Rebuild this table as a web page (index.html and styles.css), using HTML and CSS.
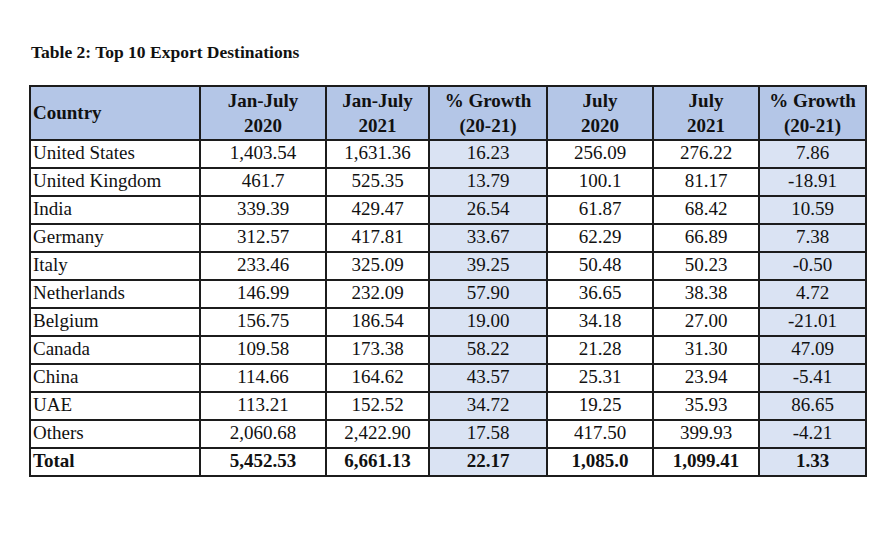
FILE: index.html
```html
<!DOCTYPE html>
<html>
<head>
<meta charset="utf-8">
<link rel="stylesheet" href="styles.css">
</head>
<body>
<div class="page">
  <h1 class="title">Table 2: Top 10 Export Destinations</h1>
  <table class="exports">
    <colgroup>
      <col class="c-country"><col class="c-jan20"><col class="c-jan21"><col class="c-g1"><col class="c-jul20"><col class="c-jul21"><col class="c-g2">
    </colgroup>
    <thead>
      <tr>
        <th class="country">Country</th>
        <th>Jan-July<br>2020</th>
        <th>Jan-July<br>2021</th>
        <th>% Growth<br>(20-21)</th>
        <th>July<br>2020</th>
        <th>July<br>2021</th>
        <th>% Growth<br>(20-21)</th>
      </tr>
    </thead>
    <tbody>
      <tr><td class="country">United States</td><td>1,403.54</td><td>1,631.36</td><td class="shade">16.23</td><td>256.09</td><td>276.22</td><td class="shade">7.86</td></tr>
      <tr><td class="country">United Kingdom</td><td>461.7</td><td>525.35</td><td class="shade">13.79</td><td>100.1</td><td>81.17</td><td class="shade">-18.91</td></tr>
      <tr><td class="country">India</td><td>339.39</td><td>429.47</td><td class="shade">26.54</td><td>61.87</td><td>68.42</td><td class="shade">10.59</td></tr>
      <tr><td class="country">Germany</td><td>312.57</td><td>417.81</td><td class="shade">33.67</td><td>62.29</td><td>66.89</td><td class="shade">7.38</td></tr>
      <tr><td class="country">Italy</td><td>233.46</td><td>325.09</td><td class="shade">39.25</td><td>50.48</td><td>50.23</td><td class="shade">-0.50</td></tr>
      <tr><td class="country">Netherlands</td><td>146.99</td><td>232.09</td><td class="shade">57.90</td><td>36.65</td><td>38.38</td><td class="shade">4.72</td></tr>
      <tr><td class="country">Belgium</td><td>156.75</td><td>186.54</td><td class="shade">19.00</td><td>34.18</td><td>27.00</td><td class="shade">-21.01</td></tr>
      <tr><td class="country">Canada</td><td>109.58</td><td>173.38</td><td class="shade">58.22</td><td>21.28</td><td>31.30</td><td class="shade">47.09</td></tr>
      <tr><td class="country">China</td><td>114.66</td><td>164.62</td><td class="shade">43.57</td><td>25.31</td><td>23.94</td><td class="shade">-5.41</td></tr>
      <tr><td class="country">UAE</td><td>113.21</td><td>152.52</td><td class="shade">34.72</td><td>19.25</td><td>35.93</td><td class="shade">86.65</td></tr>
      <tr><td class="country">Others</td><td>2,060.68</td><td>2,422.90</td><td class="shade">17.58</td><td>417.50</td><td>399.93</td><td class="shade">-4.21</td></tr>
      <tr class="total"><td class="country">Total</td><td>5,452.53</td><td>6,661.13</td><td class="shade">22.17</td><td>1,085.0</td><td>1,099.41</td><td class="shade">1.33</td></tr>
    </tbody>
  </table>
</div>
</body>
</html>
```
FILE: styles.css
```css
html, body {
  margin: 0;
  padding: 0;
  background: #ffffff;
}

.page {
  padding: 42px 0 0 29px;
  font-family: "Liberation Serif", "Times New Roman", serif;
  color: #111;
}

.title {
  margin: 0 0 23px 2px;
  font-family: "Liberation Serif", "Times New Roman", serif;
  font-size: 17.5px;
  line-height: 20px;
  font-weight: bold;
}

.exports {
  width: 836px;
  table-layout: fixed;
  border-collapse: collapse;
  border: 2px solid #1c1c1c;
  font-family: "Liberation Serif", "Times New Roman", serif;
  font-size: 19px;
}

.c-country { width: 170px; }
.c-jan20 { width: 126px; }
.c-jan21 { width: 103px; }
.c-g1 { width: 118px; }
.c-jul20 { width: 106px; }
.c-jul21 { width: 106px; }
.c-g2 { width: 107px; }

.exports th,
.exports td {
  font-family: "Liberation Serif", "Times New Roman", serif;
  border: 2px solid #1c1c1c;
  padding: 0 2px 2px;
  text-align: center;
  vertical-align: middle;
  white-space: nowrap;
}

.exports thead tr {
  height: 54px;
}

.exports th {
  background: #b4c6e7;
  font-weight: bold;
  line-height: 25px;
  padding: 0 2px 1px;
}

.exports tbody tr {
  height: 28px;
}

.exports td {
  line-height: 22px;
}

.exports .country {
  text-align: left;
  padding-left: 2px;
}

.exports .shade {
  background: #dae3f3;
}

.exports .total td {
  font-weight: bold;
}
```
